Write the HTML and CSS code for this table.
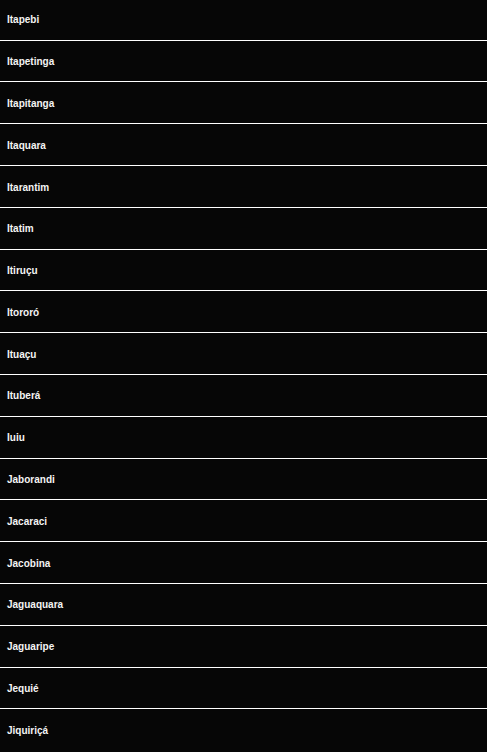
FILE: index.html
```html
<!DOCTYPE html>
<html lang="pt">
<head>
<meta charset="utf-8">
<title>Cidades</title>
<link rel="stylesheet" href="styles.css">
</head>
<body>
<ul class="list">
<li class="item">Itapebi</li>
<li class="item">Itapetinga</li>
<li class="item">Itapitanga</li>
<li class="item">Itaquara</li>
<li class="item">Itarantim</li>
<li class="item">Itatim</li>
<li class="item">Itiruçu</li>
<li class="item">Itororó</li>
<li class="item">Ituaçu</li>
<li class="item">Ituberá</li>
<li class="item">Iuiu</li>
<li class="item">Jaborandi</li>
<li class="item">Jacaraci</li>
<li class="item">Jacobina</li>
<li class="item">Jaguaquara</li>
<li class="item">Jaguaripe</li>
<li class="item">Jequié</li>
<li class="item">Jiquiriçá</li>
</ul>
</body>
</html>
```
FILE: styles.css
```css
html, body {
  margin: 0;
  padding: 0;
  background: #060606;
}
body {
  font-family: "Liberation Sans", Arial, sans-serif;
}
.list {
  list-style: none;
  margin: -1.2px 0 0;
  padding: 0;
}
.item {
  height: 39.31px;
  line-height: 39.31px;
  padding: 1.5px 7px 0;
  font-size: 10px;
  font-weight: bold;
  color: #f4f4f4;
}
.item + .item {
  border-top: 1px solid #ffffff;
}
```
